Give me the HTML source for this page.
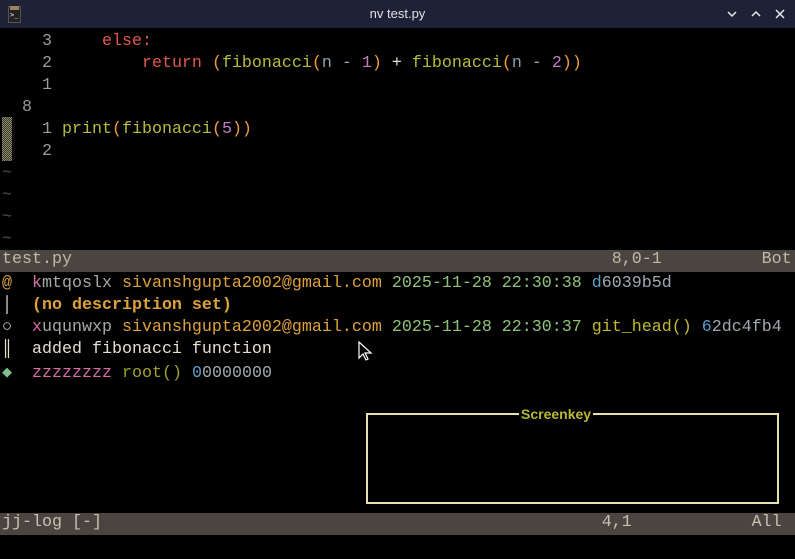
<!DOCTYPE html>
<html><head><meta charset="utf-8"><style>
html,body{margin:0;padding:0;background:#000;width:795px;height:559px;overflow:hidden}
.t{position:absolute;left:0;top:0;width:795px;height:28px;background:#1f2236;color:#e0e0e8;font:13px "Liberation Sans",sans-serif}
.r{position:absolute;left:2px;height:22px;line-height:22px;font:16.67px "Liberation Mono",monospace;white-space:pre;color:#a8a8a8;margin-top:2px}
.sl{position:absolute;left:0;width:795px;height:22px;background:#4a4540}
.g{color:#9a9a9a}.red{color:#e25a4e}.o{color:#ef9a3c}.y{color:#b5bd3a}.n{color:#8fa2b0}.p{color:#c07ec0}
.pk{color:#d66fa5}.em{color:#dea23a}.dt{color:#8fc27a}.h{color:#a3a8b0}.b{color:#5aa0c8}.w{color:#e6dfd0}.gh{color:#c2b82e}.ol{color:#a0a030}
</style></head><body>
<div class="t">
<div style="position:absolute;left:8px;top:6px;width:11px;height:15px;background:#222;border:1px solid #555"><div style="position:absolute;left:1px;top:-1px;width:9px;height:4px;background:#a08060"></div><span style="position:absolute;left:1px;top:4px;color:#fff;font:7px monospace">&gt;_</span></div>
<div style="position:absolute;left:0;width:795px;top:6px;text-align:center">nv test.py</div>
<svg style="position:absolute;left:725px;top:7px" width="65" height="14" viewBox="0 0 65 14" fill="none" stroke="#e8e8f0" stroke-width="1.5"><path d="M3 5l4 4 4-4"/><path d="M27 9l4-4 4 4"/><path d="M51 3l8 8M59 3l-8 8"/></svg>
</div>
<div class="r" style="top:30px"><span class="g">    3</span>     <span class="red">else:</span></div>
<div class="r" style="top:52px"><span class="g">    2</span>         <span class="red">return</span> <span class="o">(</span><span class="y">fibonacci</span><span class="o">(</span><span class="n">n</span> <span class="n">-</span> <span class="p">1</span><span class="o">)</span> <span class="w">+</span> <span class="y">fibonacci</span><span class="o">(</span><span class="n">n</span> <span class="n">-</span> <span class="p">2</span><span class="o">))</span></div>
<div class="r" style="top:74px"><span class="g">    1</span></div>
<div class="r" style="top:96px"><span class="g">  8</span></div>
<div class="r" style="top:118px"><span class="g">    1 </span><span class="y">print</span><span class="o">(</span><span class="y">fibonacci</span><span class="o">(</span><span class="p">5</span><span class="o">))</span></div>
<div class="r" style="top:140px"><span class="g">    2</span></div>
<div style="position:absolute;left:2px;top:117px;width:10px;height:44px;background:repeating-conic-gradient(#8a8a6a 0 25%,#3a3a30 0 50%) 0 0/2px 2px"></div>
<div class="r" style="top:162px;color:#505050">~</div>
<div class="r" style="top:184px;color:#505050">~</div>
<div class="r" style="top:206px;color:#505050">~</div>
<div class="r" style="top:228px;color:#505050">~</div>
<div class="sl" style="top:250px"></div>
<div class="r" style="top:248px;color:#c0b8a8">test.py                                                      8,0-1          Bot</div>
<div class="r" style="top:272px"><span class="em">@</span>  <span class="pk">k</span>mtqoslx <span class="em">sivanshgupta2002@gmail.com</span> <span class="dt">2025-11-28 22:30:38</span> <span class="b">d</span><span class="h">6039b5d</span></div>
<div class="r" style="top:294px"><span class="w">│</span>  <span class="em" style="font-weight:bold">(no description set)</span></div>
<div class="r" style="top:316px"><span class="w">○</span>  <span class="pk">x</span>uqunwxp <span class="em">sivanshgupta2002@gmail.com</span> <span class="dt">2025-11-28 22:30:37</span> <span class="gh">git_head()</span> <span class="b">6</span><span class="h">2dc4fb4</span></div>
<div class="r" style="top:338px"><span class="w">║</span>  <span class="w">added fibonacci function</span></div>
<div class="r" style="top:360px"><span style="color:#7fc090">◆</span>  <span class="pk">zzzzzzzz</span> <span class="ol">root()</span> <span class="b">0</span><span class="h">0000000</span></div>
<svg style="position:absolute;left:358px;top:341px" width="16" height="22" viewBox="0 0 16 22"><path d="M1 1v16l4-4 3 6 2-1-3-6h6z" fill="#000" stroke="#fff" stroke-width="1.2"/></svg>
<div style="position:absolute;left:366px;top:413px;width:409px;height:87px;border:2px solid #e8e0b0"></div>
<div style="position:absolute;left:519px;top:404px;background:#000;padding:0 2px;color:#b8b830;font:bold 14px 'Liberation Sans',sans-serif;line-height:20px">Screenkey</div>
<div class="sl" style="top:513px"></div>
<div class="r" style="top:511px;color:#c8c0b0">jj-log [-]                                                  4,1            All</div>
</body></html>
